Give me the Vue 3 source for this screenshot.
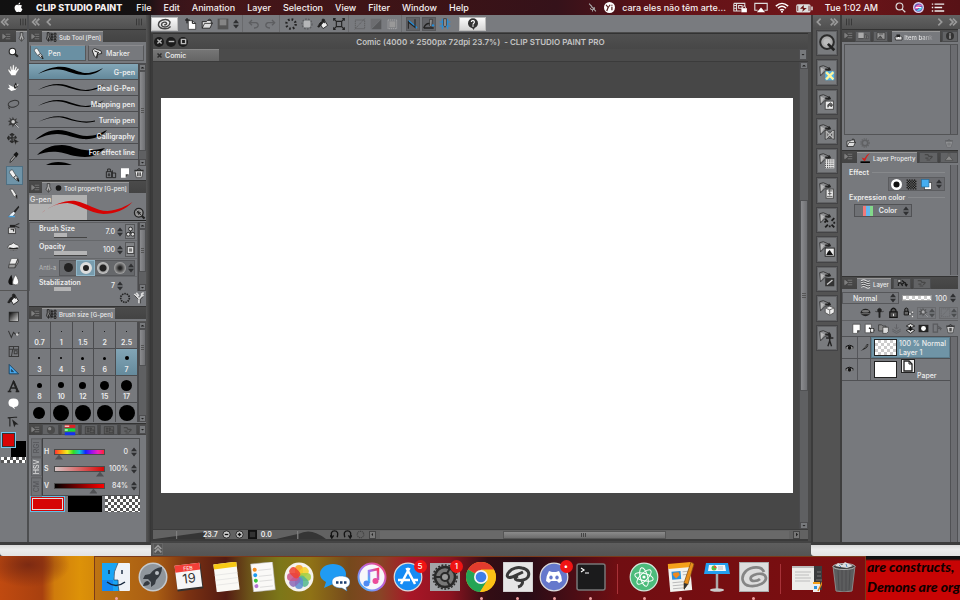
<script setup>
import { ref } from 'vue'

const menus = ['File', 'Edit', 'Animation', 'Layer', 'Selection', 'View', 'Filter', 'Window', 'Help']

const tools = [
  ['magnify', 'Magnify'], ['hand', 'Move canvas'], ['rotate', 'Operation'], ['lasso', 'Lasso'],
  ['wand', 'Auto select'], ['move', 'Move layer'], ['dropper', 'Eyedropper'], ['pen', 'Pen'],
  ['pencil', 'Pencil'], ['brush', 'Brush'], ['airbrush', 'Airbrush'], ['deco', 'Decoration'],
  ['eraser', 'Eraser'], ['blend', 'Blend'], ['fill', 'Fill'], ['gradient', 'Gradient'],
  ['contour', 'Contour'], ['frame', 'Frame border'], ['ruler', 'Ruler'], ['text', 'Text'],
  ['balloon', 'Balloon'], ['correct', 'Correct line']
]
const activeTool = ref('pen')

const thin = 'M9 10C19 4 29 3 37 5C46 8 53 11 61 9.500C68 8 72 6 75 4C70 9 63 11 57 11C48 11 42 8 34 6C26 4 18 6 9 10Z'
const pens = [
  { name: 'G-pen', d: 'M9 10C20 3 31 1.500 40 4C49 7 55 10.500 62 8.500C68 7.500 72 5 74 4C70 8 64 11 56 11C47 11 42 8 34 6C26 4 18 6 9 10Z' },
  { name: 'Real G-Pen', d: thin },
  { name: 'Mapping pen', d: thin },
  { name: 'Turnip pen', d: 'M9 10C20 4 30 3 38 5.500C48 9 57 11 66 8.500V9.500C57 12 48 10 38 7C30 4 20 5 9 10Z' },
  { name: 'Calligraphy', d: 'M6 12C13 6 20 2 29 2C41 2 47 8 58 8C66 8 72 5 78 2C74 8 63 12 54 11C44 10 38 6 28 6C20 6 14 8 6 12Z' },
  { name: 'For effect line', d: 'M8 11C15 4 23 1 33 1C42 1 46 5 56 6C64 7 70 5 76 4C72 8 66 13 56 13C44 13 38 9 29 8C20 7 14 9 8 11Z' },
  { name: '', d: 'M17 5C24 1 34 1 43 5Z' }
]

const sizes = [
  [0.7, 1], [1, 1], [1.5, 1], [2, 1], [2.5, 1],
  [3, 2], [4, 2], [5, 3], [6, 3], [7, 4],
  [8, 5], [10, 6], [12, 7], [15, 9], [17, 11],
  [20, 12], [25, 16], [30, 16], [40, 16], [50, 16]
]
const activeSize = ref(7)

const props = ref([
  { label: 'Brush Size', value: '7.0', pct: 40, icon: 'dyn' },
  { label: 'Opacity', value: '100', pct: 100, icon: 'sq' }
])
const channels = ref([
  { id: 'h', name: 'H', value: 0, max: 360, text: '0' },
  { id: 's', name: 'S', value: 100, max: 100, text: '100%' },
  { id: 'v', name: 'V', value: 84, max: 100, text: '84%' }
])

const materials = ['quick', 'mcolor', 'mimage', 'mframe', 'mdots', 'mballoon', 'mburst', 'mscene', 'mline', 'mcube', 'mpose']
const layerTools = ['lnew', 'lvec', 'lfolder', 'ldown', 'lmerge', 'lmask', 'lapply', 'trash']

const dock = [
  { id: 'finder', run: true }, { id: 'rocket' }, { id: 'calendar' }, { id: 'notes' }, { id: 'reminders' },
  { id: 'photos' }, { id: 'messages' }, { id: 'itunes' }, { id: 'appstore', badge: '5' },
  { id: 'prefs', badge: '1' }, { id: 'chrome', run: true }, { id: 'csp', run: true },
  { id: 'discord', badge: '•', run: true }, { id: 'terminal', run: true },
  { id: 'sep1', sep: true },
  { id: 'atom', run: true }, { id: 'pages', run: true }, { id: 'keynote' }, { id: 'spiral', run: true },
  { id: 'sep2', sep: true },
  { id: 'minimized' }, { id: 'bin' }
]
const petals = ['#f9a51a', '#f6d32b', '#a5cf45', '#58b88f', '#5f8fd0', '#8e6bb8', '#c9568b', '#ee4236']
</script>

<template>
  <div class="desktop">
    <svg class="defs" aria-hidden="true">
      <symbol id="apple" viewBox="0 0 16 18"><path fill="#fff" d="M11 0C9 0 7.500 2 8 4C10 4 11.300 2 11 0ZM8 5C6 4 4 4 2.500 5.300C0 7.500 1 12 2.500 14.500C4 17.500 5.500 17.500 8 16.600C10.500 17.500 12 17.500 13.500 15C14.200 14 14.700 13 15 12C12 10.500 12 7.500 14.500 6C13 4 10.500 4 8 5Z" /></symbol>
      <symbol id="mic" viewBox="0 0 16 16"><path d="M6 4V8M11 7V10M4 9C5 13 11 13 12 9M8 12V15M2 1L14 15" stroke="#aaa" stroke-width="1.800" fill="none" /></symbol>
      <symbol id="yi" viewBox="0 0 16 16"><circle cx="8" cy="8" r="8" fill="#fff" /><path d="M3 4L6 8L9 4M6 8L4 13M11.500 7V12M11.500 4V5.500" stroke="#522" stroke-width="1.800" fill="none" /></symbol>
      <symbol id="screenlock" viewBox="0 0 20 16"><path d="M1 2H17V7M1 2V13H11M5 2V13M1 5H5M1 9H5M8 5H13V9H8Z" stroke="#ddd" stroke-width="1.500" fill="none" /><rect x="12" y="9" width="8" height="6" fill="#fff" /><path d="M14 9V7Q16 4 18 7V9" stroke="#fff" fill="none" /></symbol>
      <symbol id="airplay" viewBox="0 0 20 16"><path d="M5 12H1V2H19V12H15" stroke="#ddd" stroke-width="1.600" fill="none" /><path d="M10 8L16 15H4Z" fill="#fff" /></symbol>
      <symbol id="wifi" viewBox="0 0 20 16"><path d="M1 6Q10 -2 19 6M4 9Q10 3.500 16 9M7 12Q10 9.500 13 12" stroke="#fff" stroke-width="2" fill="none" /><circle cx="10" cy="14" r="1.500" fill="#fff" /></symbol>
      <symbol id="battery" viewBox="0 0 22 16"><rect x="0" y="3" width="19" height="11" rx="2" fill="#ddd" /><rect x="20" y="6" width="2" height="5" fill="#ddd" /><path d="M10 4L5 9H9L8 13L14 8H10Z" fill="#611" /><path d="M2 5V12M17 5V12" stroke="#611" /></symbol>
      <symbol id="search" viewBox="0 0 16 16"><circle cx="6.500" cy="6.500" r="5" stroke="#ddd" stroke-width="1.600" fill="none" /><path d="M10 10L15 15" stroke="#ddd" stroke-width="1.800" /></symbol>
      <symbol id="siri" viewBox="0 0 16 16"><circle cx="8" cy="8" r="8" fill="#dcd2ee" /><circle cx="8" cy="8" r="6" fill="#6a5ab8" /><path d="M2 9Q8 0 14 6Q9 5 8 8Q7 12 2 9Z" fill="#f06ab4" /><path d="M5 13Q12 14 14 7Q9 8 5 13Z" fill="#51d5ec" /><path d="M4 8H12" stroke="#fff" stroke-width="1.500" /></symbol>
      <symbol id="list" viewBox="0 0 20 16"><path d="M5 3H19M5 8H16M5 13H19M1 3H3M1 8H3M1 13H3" stroke="#eee" stroke-width="2" /></symbol>

      <symbol id="dbl" viewBox="0 0 12 12"><path d="M6 2L2 6L6 10M10 2L6 6L10 10" stroke="#9a9a9a" stroke-width="2" fill="none" /></symbol>
      <symbol id="sgl" viewBox="0 0 12 12"><path d="M8 2L4 6L8 10" stroke="#9a9a9a" stroke-width="2" fill="none" /></symbol>
      <symbol id="grip" viewBox="0 0 12 12"><path d="M3 2V10M6 2V10M9 2V10" stroke="#333" stroke-width="1" /></symbol>
      <symbol id="pmenu" viewBox="0 0 12 12"><path d="M1 3L5 6L1 9ZM5 3H11M6 6H11M5 9H11" stroke="#808080" stroke-width="1" fill="#808080" /></symbol>
      <symbol id="penset" viewBox="0 0 18 16"><path d="M3 1H6V6L8 11L5 15L2 11L3 6ZM5 9V14M10 3H12V5H10ZM10 7H12V9H10ZM10 11H12V13H10ZM14 2H17V5H14ZM14 7H17V10H14ZM14 12H17V15H14ZM9 1V15" stroke="#151515" fill="#888" stroke-width="1.300" /></symbol>
      <symbol id="nib" viewBox="0 0 12 16"><path d="M4 1H8V6L10 10L6 15L2 10L4 6Z" fill="#aaa" stroke="#222" /><path d="M6 9V14" stroke="#222" /></symbol>
      <symbol id="dot" viewBox="0 0 12 16"><circle cx="6" cy="8" r="4.500" fill="#151515" /></symbol>

      <symbol id="magnify" viewBox="0 0 18 18"><path d="M10 10L15 15" stroke="#222" stroke-width="3" /><circle cx="7.500" cy="7.500" r="4.500" fill="#fff" stroke="#222" stroke-width="1.500" /></symbol>
      <symbol id="magnify2" viewBox="0 0 18 18"><path d="M11 11L16 16" stroke="#222" stroke-width="3" /><circle cx="8" cy="8" r="6" fill="#999" stroke="#222" stroke-width="1.800" /><path d="M5 5L11 11M8 5V11M5 8H11" stroke="#222" stroke-width="1.300" /></symbol>
      <symbol id="hand" viewBox="0 0 18 18"><path d="M6 16L2 10L1 7L3 7.500L5 10L4 3L6 3L7 8L8 1H10L10 8L12 3L14 4L12.500 9L15 6L17 7L13 13L12 16Z" fill="#fff" stroke="#555" stroke-width=".5" /></symbol>
      <symbol id="rotate" viewBox="0 0 18 18"><path d="M2 5L8 8L16 4L12 12L6 14L1 10L4 9Z" fill="#fff" /><path d="M9 8L12 2L15 8L11 11Z" fill="#222" /><path d="M11 7L13 5L13 9Z" fill="#ddd" /></symbol>
      <symbol id="lasso" viewBox="0 0 18 18"><ellipse cx="9" cy="8" rx="7.500" ry="4.500" transform="rotate(-15 9 8)" fill="none" stroke="#333" stroke-width="1.400" /><path d="M4 11Q1 13 4 15" stroke="#333" stroke-width="1.400" fill="none" /></symbol>
      <symbol id="wand" viewBox="0 0 18 18"><path d="M8 1L10 5L14 3L12 7L16 9L12 10L16 16L10 12L8 16L7 12L2 13L4 9L1 7L5 6L3 2L7 5Z" fill="#3a3a3a" /><circle cx="8.500" cy="8" r="2.500" fill="#ccc" /><path d="M11 11L16 16" stroke="#eee" /></symbol>
      <symbol id="move" viewBox="0 0 18 18"><path d="M1 7H13M7 1V13M4 3L7 1L10 3M4 11L7 13L10 11M3 4L1 7L3 10M11 4L13 7" stroke="#2a2a2a" stroke-width="2" fill="none" /><path d="M8 7L17 12L13 13L12 17Z" fill="#222" stroke="#888" stroke-width=".5" /></symbol>
      <symbol id="dropper" viewBox="0 0 18 18"><path d="M4 16L5 12L10 6L12 8L7 14Z" fill="#999" stroke="#222" /><path d="M9 5L13 1L16 4L13 9Z" fill="#151515" /></symbol>
      <symbol id="pen" viewBox="0 0 18 18"><path d="M3 2L6 1L11 9L7 12L2 5Z" fill="#f2f2f2" stroke="#333" stroke-width=".8" /><path d="M8 12L11 9L14 12L15 17L11 15Z" fill="#ddd" stroke="#222" /><path d="M12 12L15 17" stroke="#111" stroke-width="1.500" /></symbol>
      <symbol id="pencil" viewBox="0 0 18 18"><path d="M4 3L8 3L13 11L14 16L9 12Z" fill="#eee" stroke="#333" stroke-width=".8" /><path d="M11 12L14 16L14 11Z" fill="#222" /></symbol>
      <symbol id="brush" viewBox="0 0 18 18"><path d="M16 1L9 9L11 11L17 3Z" fill="#222" /><path d="M9 9L5 12L2 16L8 16L12 11Z" fill="#e9f2fa" stroke="#333" stroke-width=".7" /><path d="M2 16H11" stroke="#4b9fd8" stroke-width="2" /></symbol>
      <symbol id="airbrush" viewBox="0 0 18 18"><path d="M2 8H11L12 16H2Z" fill="#ddd" stroke="#222" /><path d="M4 4H12V7H4Z" fill="#222" /><path d="M12 4L17 2M12 6L17 8M5 10H9V13" stroke="#333" stroke-width="1.500" fill="none" /></symbol>
      <symbol id="deco" viewBox="0 0 18 18"><path d="M1 10Q3 5 6 6Q9 2 12 6Q16 6 17 10Q13 15 9 14Q4 15 1 10Z" fill="#eee" stroke="#333" /><path d="M3 11Q9 13 15 11" stroke="#222" stroke-width="2" fill="none" /></symbol>
      <symbol id="eraser" viewBox="0 0 18 18"><path d="M6 2H15L12 10H3Z" fill="#eee" stroke="#444" stroke-width=".8" /><path d="M3 10H12L11 15H2ZM12 10L15 3L16 7L11 15" fill="#999" stroke="#333" /></symbol>
      <symbol id="blend" viewBox="0 0 18 18"><path d="M6 1Q1 9 2 12Q3 16 8 15V8Z" fill="#111" /><path d="M12 1Q17 9 16 13Q13 17 8 14Q7 9 12 1Z" fill="#fff" stroke="#555" /></symbol>
      <symbol id="fill" viewBox="0 0 18 18"><path d="M4 8L11 3L16 11L9 16Z" fill="#eee" stroke="#222" stroke-width="1.300" /><path d="M8 6Q6 0 11 2L12 8M4 8L1 13Q3 15 5 12L10 6L6 6Z" fill="#222" stroke="#222" /></symbol>
      <symbol id="gradient" viewBox="0 0 18 18"><linearGradient id="gg" x1="0" y1="0" x2="1" y2="1"><stop offset="0" stop-color="#000" /><stop offset="1" stop-color="#ddd" /></linearGradient><rect x="3" y="3" width="13" height="13" fill="url(#gg)" stroke="#222" /></symbol>
      <symbol id="contour" viewBox="0 0 18 18"><path d="M2 4L6 13L9 6L13 10L17 6" fill="none" stroke="#333" stroke-width="1.400" /><circle cx="14" cy="9" r="1.800" fill="#ccc" /></symbol>
      <symbol id="frame" viewBox="0 0 18 18"><path d="M3 2H16V16H3ZM3 6H16M8 6L6 16M10 8H14V12H10ZM9 2V6" fill="none" stroke="#3b3b3b" stroke-width="1.400" /></symbol>
      <symbol id="ruler" viewBox="0 0 18 18"><path fill-rule="evenodd" d="M3 2L16 15H3ZM6 9V12H9Z" fill="#48a8ee" stroke="#113b58" stroke-width="1.200" /></symbol>
      <symbol id="text" viewBox="0 0 18 18"><path d="M3 16L9 2L15 16M5 11H13M1 16H6M12 16H17" fill="none" stroke="#222" stroke-width="2" /><path d="M9 2L15 16" stroke="#222" stroke-width="3" /></symbol>
      <symbol id="balloon" viewBox="0 0 18 18"><path d="M9 2Q16 2 16 8Q16 14 10 14L11 17L7 14Q2 13 2 8Q2 2 9 2Z" fill="#fff" /></symbol>
      <symbol id="correct" viewBox="0 0 18 18"><path d="M1 4Q8 3 11 3H14M4 4V16" fill="none" stroke="#222" stroke-width="1.500" /><path d="M7 6L16 13L12 13L10 17Z" fill="#222" /></symbol>
      <symbol id="marker" viewBox="0 0 18 18"><path d="M2 5Q4 0 9 3L15 5L16 9L10 10L9 16L5 13Z" fill="#e8e8e8" stroke="#1a1a1a" stroke-width="1.300" /><path d="M5 5L12 8M10 8L8 15" stroke="#222" stroke-width="1.500" /></symbol>

      <symbol id="bag" viewBox="0 0 18 18"><path d="M2 7H10V16H2ZM4 7V3H8V7M11 5V16H16V9H11M6 9V14M4 12H8" fill="none" stroke="#222" stroke-width="1.400" /></symbol>
      <symbol id="sheet" viewBox="0 0 18 18"><path d="M3 2H15V11L10 16H3Z" fill="#fff" /><path d="M10 16V11H15Z" fill="#444" /></symbol>
      <symbol id="trash" viewBox="0 0 18 18"><path d="M3 6H15L13 16H5Z" fill="#eee" stroke="#222" /><path d="M2 5H16M6 5Q9 0 12 5M7 8V14M9 8V14M11 8V14" stroke="#222" stroke-width="1.300" fill="none" /></symbol>
      <symbol id="spin" viewBox="0 0 8 12"><path d="M4 0L8 5H0ZM4 12L8 7H0Z" fill="#2f3032" /></symbol>
      <symbol id="dyn" viewBox="0 0 12 16"><path d="M6 8V5M6 8L4 11M6 8L9 11" stroke="#111" /><g fill="#ddd" stroke="#222" stroke-width="1.200"><circle cx="6" cy="4" r="2.500" /><circle cx="3" cy="11" r="2.500" /><circle cx="9" cy="11" r="2.500" /></g></symbol>
      <symbol id="sq" viewBox="0 0 12 16"><rect x="3" y="5" width="6" height="6" fill="#777" stroke="#eee" stroke-width="1.500" /><rect x="1.500" y="3.500" width="9" height="9" fill="none" stroke="#333" /></symbol>
      <symbol id="ring" viewBox="0 0 18 18"><circle cx="9" cy="9" r="6.500" fill="none" stroke="#222" stroke-width="2.500" stroke-dasharray="2.200 1.400" /></symbol>
      <symbol id="wrench" viewBox="0 0 18 18"><path d="M2 3L6 7L8 5L5 1M16 1L13 3V6L16 5M13 6L9 11V17M6 7L9 11" stroke="#ddd" stroke-width="2.500" fill="none" /><path d="M2 5L8 11M15 7L11 11V17" stroke="#222" fill="none" /></symbol>
      <symbol id="sphere" viewBox="0 0 18 16"><circle cx="9" cy="8" r="6" fill="#4b4b4b" /><circle cx="7" cy="6" r="2.500" fill="#888" /></symbol>
      <symbol id="rgb" viewBox="0 0 18 16"><path d="M2 1H16V5H2Z" fill="#d22" /><path d="M2 6H16V10H2Z" fill="#1d3" /><path d="M2 11H16V15H2Z" fill="#13e" /><path d="M2 3H8M2 8H6" stroke="#fff" stroke-width="2" opacity=".7" /></symbol>
      <symbol id="swatch" viewBox="0 0 18 16"><path d="M2 3H16V14H2ZM5 5H7V7H5ZM9 5H11V7H9ZM5 9H7V11H5ZM12 8H15V12H9V9Z" fill="#5c5c5c" stroke="#3a3a3a" /></symbol>

      <symbol id="spiralIcon" viewBox="0 0 20 14"><path d="M9 8Q12 8 12 6Q11 4 8 5Q5 6 6 9Q8 12 13 10Q17 8 16 4Q13 0 7 2Q1 4 2 9Q4 13 10 13Q14 13 17 10" fill="none" stroke="#444" stroke-width="1.800" /></symbol>
      <symbol id="newdoc" viewBox="0 0 18 18"><path d="M5 4H11L16 8V17H5Z" fill="#fff" stroke="#222" /><path d="M11 4V8H16M3 0V8M0 3H7" stroke="#111" stroke-width="1.500" fill="none" /></symbol>
      <symbol id="open" viewBox="0 0 20 18"><path d="M2 5H9L11 3H17V7L19 7L15 16H2Z" fill="#ddd" stroke="#222" stroke-width="1.500" /><path d="M2 16L6 8H19M12 2Q15 -1 17 3" stroke="#222" stroke-width="1.300" fill="none" /></symbol>
      <symbol id="save" viewBox="0 0 18 18"><path d="M1 1H17V17H1Z" fill="#555" /><path d="M4 2H14V11H4Z" fill="#858585" /></symbol>
      <symbol id="undo" viewBox="0 0 18 18"><path d="M6 3L2 7L6 11M2 7H12Q16 8 15 12Q14 15 9 15" stroke="#5d5e61" stroke-width="2" fill="none" /></symbol>
      <symbol id="burst" viewBox="0 0 18 18"><circle cx="9" cy="9" r="7" fill="none" stroke="#222" stroke-width="3.500" stroke-dasharray="2.500 3" /></symbol>
      <symbol id="clearout" viewBox="0 0 18 18"><rect x="4" y="4" width="10" height="10" fill="#b5b6b8" /><circle cx="9" cy="9" r="7.500" fill="none" stroke="#5c5d60" stroke-width="2" stroke-dasharray="2.500 2" /></symbol>
      <symbol id="scale" viewBox="0 0 18 18"><path d="M5 5H13V13H5ZM2 2L5 5M16 2L13 5M2 16L5 13M16 16L13 13M1 4V1H4M14 1H17V4M1 14V17H4M14 17H17V14" fill="none" stroke="#222" stroke-width="1.700" /></symbol>
      <symbol id="desel" viewBox="0 0 18 18"><path d="M2 3H16V16H2ZM16 1L1 17" fill="none" stroke="#5b5b5d" stroke-width="1.300" stroke-dasharray="2 1" /></symbol>
      <symbol id="invsel" viewBox="0 0 18 18"><path d="M1 1H17L1 17Z" fill="#6c6d70" /><path d="M17 2V17H2Z" fill="#58595b" /></symbol>
      <symbol id="border" viewBox="0 0 18 18"><rect x="5" y="5" width="9" height="9" fill="#999" /><rect x="3" y="3" width="13" height="13" fill="none" stroke="#bbb" stroke-dasharray="2 1" /></symbol>
      <symbol id="snapr" viewBox="0 0 18 18"><path d="M2 4L15 15" stroke="#238edb" stroke-width="2.500" /><path d="M2 6L12 14V2M2 4V16" stroke="#222" stroke-width="1.600" fill="none" /></symbol>
      <symbol id="snaps" viewBox="0 0 18 18"><path d="M1 15Q5 6 12 9M1 15H16" stroke="#222" stroke-width="2" fill="none" /><path d="M10 2V12L13 14L14 2Z" fill="#999" stroke="#222" /><circle cx="15" cy="11" r="1.800" fill="#238edb" /></symbol>
      <symbol id="snapg" viewBox="0 0 18 18"><path d="M1 6H17M1 12H17M5 1V17M13 1V17" stroke="#238edb" stroke-width="1.600" /><path d="M7 1H11V11L9 14L7 11Z" fill="#999" stroke="#222" /></symbol>
      <symbol id="help" viewBox="0 0 18 18"><circle cx="9" cy="8" r="7.500" fill="#333" /><path d="M7 14L10 18L12 14" fill="#333" /><path d="M6.500 6Q7 3.500 9.500 4Q12 5 10.500 7.500Q9 8.500 9 10M9 11V13" stroke="#fff" stroke-width="1.800" fill="none" /></symbol>

      <symbol id="fold" viewBox="0 0 22 26"><path d="M3 6L7 5L14 8V10L9 11L4 16Z" fill="#8d8e90" stroke="#333" /><path d="M9 9H14L13 7" stroke="#222" stroke-width="2" fill="none" /><path d="M4 7V15L8 9Z" fill="#bbb" /></symbol>
      <symbol id="quick" viewBox="0 0 22 26"><circle cx="11" cy="12" r="7.500" fill="#aaa" stroke="#2b2b2b" stroke-width="2.200" /><circle cx="11" cy="12" r="4" fill="#bbb" /><path d="M12 14L19 21" stroke="#222" stroke-width="3" /></symbol>
      <symbol id="mcolor" viewBox="0 0 22 26"><use href="#fold" /><rect x="9" y="11" width="10" height="10" fill="#4fb2e8" /><path d="M10 12L18 20M18 12L10 20" stroke="#fff6a0" stroke-width="2.500" /></symbol>
      <symbol id="mimage" viewBox="0 0 22 26"><use href="#fold" /><rect x="9" y="12" width="9" height="9" fill="#eee" stroke="#444" /><path d="M12 19V16L15 14L17 16L16 18L14 17" stroke="#333" stroke-width="1" fill="#666" /></symbol>
      <symbol id="mframe" viewBox="0 0 22 26"><use href="#fold" /><path d="M9 11L12 12V20L9 21ZM19 11L16 12V20L19 21ZM13 13H15V15H13ZM13 18H15V20H13Z" fill="#aaa" stroke="#222" stroke-width=".7" /><path d="M10 12L18 20M18 12L10 20" stroke="#bbb" stroke-width="1.500" /></symbol>
      <symbol id="mdots" viewBox="0 0 22 26"><use href="#fold" /><rect x="9" y="11" width="10" height="10" fill="#eee" /><path d="M9 12H19M9 14H19M9 16H19M9 18H19M9 20H19" stroke="#222" stroke-dasharray="1 1" /></symbol>
      <symbol id="mballoon" viewBox="0 0 22 26"><use href="#fold" /><rect x="10" y="12" width="8" height="10" fill="#eee" stroke="#444" /><path d="M12 14H17M12 17H16M14 12V19M11 20H17" stroke="#555" /></symbol>
      <symbol id="mburst" viewBox="0 0 22 26"><use href="#fold" /><path d="M9 12L12 15M19 11L16 14M9 21L12 18M19 21L16 18M8 15H10M18 16H20M14 21V19" stroke="#1c1c1c" stroke-width="2" /></symbol>
      <symbol id="mscene" viewBox="0 0 22 26"><use href="#fold" /><rect x="9" y="12" width="10" height="9" fill="#eee" stroke="#222" /><path d="M10 20L12 16L14 14L16 17L18 20Z" fill="#111" /></symbol>
      <symbol id="mline" viewBox="0 0 22 26"><use href="#fold" /><rect x="9" y="12" width="10" height="9" fill="#333" /><path d="M11 19L17 14" stroke="#ccc" stroke-width="1.500" /></symbol>
      <symbol id="mcube" viewBox="0 0 22 26"><use href="#fold" /><path d="M14 11L19 13V18L14 21L9 18V13Z" fill="#eee" stroke="#555" /><path d="M9 13L14 15L19 13M14 15V21" stroke="#666" fill="none" /></symbol>
      <symbol id="mpose" viewBox="0 0 22 26"><use href="#fold" /><path d="M14 10V16M10 13H18M14 16L12 22M14 16L16 22" stroke="#222" stroke-width="1.500" /><circle cx="14" cy="11" r="1.500" fill="#222" /></symbol>

      <symbol id="navtab" viewBox="0 0 18 16"><path d="M2 3H10V11H2Z" fill="#aaa" /><path d="M12 6H14V12H12ZM15 8H17V12H15ZM2 12H10" fill="#888" stroke="#333" stroke-width=".6" /></symbol>
      <symbol id="pictab" viewBox="0 0 18 16"><path d="M3 3H15V13H3Z" fill="#999" stroke="#333" /><path d="M4 12L8 8L11 12M6 5H12" stroke="#333" fill="#555" /></symbol>
      <symbol id="itemtab" viewBox="0 0 18 16"><path d="M2 8L6 6H13L16 9V14H3Z" fill="#ddd" stroke="#1b1b1b" stroke-width="1.400" /><path d="M5 3H12V9H5Z" fill="#222" /><path d="M7 9H11" stroke="#fff" stroke-width="2" /></symbol>
      <symbol id="infotab" viewBox="0 0 18 16"><circle cx="9" cy="8" r="6" fill="#333" /><path d="M9 4V6M9 7V12" stroke="#aaa" stroke-width="2" /></symbol>
      <symbol id="gear" viewBox="0 0 18 18"><circle cx="9" cy="9" r="5" fill="none" stroke="#606163" stroke-width="3" /><circle cx="9" cy="9" r="7.500" fill="none" stroke="#606163" stroke-width="2" stroke-dasharray="2 2" /></symbol>
      <symbol id="redtick" viewBox="0 0 20 18"><path d="M1 15H18V18H1Z" fill="#000" /><path d="M3 8L8 10Q11 3 18 0Q11 8 9 15Q6 14 3 8Z" fill="#d5201c" /></symbol>
      <symbol id="layers" viewBox="0 0 20 18"><path d="M2 3Q7 0 11 3T18 3M2 7Q7 4 11 7T18 7M2 11Q7 8 11 11T18 11M2 15Q7 12 11 15T18 15" fill="none" stroke="#ddd" stroke-width="2" /><path d="M2 5Q7 2 11 5T18 5M2 9Q7 6 11 9T18 9M2 13Q7 10 11 13T18 13" fill="none" stroke="#222" /></symbol>
      <symbol id="hist" viewBox="0 0 20 18"><path d="M3 3H8V8H3Z" fill="#bbb" stroke="#222" /><path d="M4 14Q3 8 8 9L11 14M17 14Q17 7 12 8M10 5L14 8L10 11M15 11L17 14L19 11" stroke="#1b1b1b" stroke-width="2" fill="none" /></symbol>
      <symbol id="misc" viewBox="0 0 20 18"><path d="M3 5H8L10 8H15M4 11H9M12 12L16 8M6 14L12 14" stroke="#484848" stroke-width="2" fill="none" /></symbol>
      <symbol id="flask" viewBox="0 0 18 16"><path d="M8 2V7L3 13H15L10 7V2Z" fill="#8a8a8a" stroke="#4a4a4a" /></symbol>
      <symbol id="fcircle" viewBox="0 0 18 18"><circle cx="9" cy="9" r="7" fill="#111" stroke="#fff" stroke-width="4" /></symbol>
      <symbol id="ftone" viewBox="0 0 18 18"><rect x="1" y="1" width="16" height="16" fill="#666" /><path d="M1 2H17M1 6H17M1 10H17M1 14H17" stroke="#111" stroke-width="2" stroke-dasharray="2 2" /><path d="M3 4H17M3 8H17M3 12H17M3 16H17" stroke="#111" stroke-width="2" stroke-dasharray="2 2" /></symbol>
      <symbol id="flayer" viewBox="0 0 18 18"><rect x="6" y="6" width="11" height="11" fill="#fff" stroke="#333" /><rect x="1" y="1" width="12" height="12" fill="#45adf0" stroke="#1f6b9b" /></symbol>
      <symbol id="lclip" viewBox="0 0 18 18"><ellipse cx="9" cy="9" rx="8" ry="6" fill="#222" /><ellipse cx="9" cy="7" rx="6" ry="2" fill="#777" /><path d="M2 11H16" stroke="#aaa" /></symbol>
      <symbol id="lref" viewBox="0 0 18 18"><path d="M6 4Q9 0 12 4V8H10V17H8V8H6ZM2 7L5 8M16 7L13 8" fill="#222" stroke="#222" /></symbol>
      <symbol id="lock" viewBox="0 0 18 18"><path d="M3 8H15V17H3ZM5 8V5Q9 -1 13 5V8" fill="#555" stroke="#151515" stroke-width="2" /><path d="M9 11V15" stroke="#eee" stroke-width="1.500" /></symbol>
      <symbol id="locka" viewBox="0 0 18 18"><path d="M2 7H9V13H2ZM3 7V3Q5 0 8 3V7" fill="#666" stroke="#151515" stroke-width="1.600" /><path d="M10 10H13V13H10ZM14 14H17V17H14ZM14 7H17V10H14Z" fill="#fff" stroke="#222" stroke-width=".5" /></symbol>
      <symbol id="lnew" viewBox="0 0 18 18"><path d="M3 2H15V12L10 17H3Z" fill="#fff" stroke="#333" /><path d="M10 17V12H15Z" fill="#444" /></symbol>
      <symbol id="lvec" viewBox="0 0 18 18"><path d="M2 2H12V16H2Z" fill="#fff" stroke="#333" /><path d="M8 8L17 12M10 15L17 12" stroke="#222" stroke-width="2" /><rect x="11" y="9" width="5" height="6" fill="#eee" stroke="#222" /></symbol>
      <symbol id="lfolder" viewBox="0 0 18 18"><path d="M1 3H6L8 5H13V13H1Z" fill="#888" stroke="#222" /><path d="M8 7H17V14L14 17H8Z" fill="#ddd" stroke="#222" /></symbol>
      <symbol id="ldown" viewBox="0 0 18 18"><path d="M9 2V9M6 7L9 10L12 7M2 10L9 14L16 10M2 13L9 17L16 13" stroke="#5f6064" stroke-width="1.500" fill="none" /></symbol>
      <symbol id="lmerge" viewBox="0 0 18 18"><path d="M2 5L9 1L16 5L9 8ZM2 12L9 9L16 12L9 17Z" stroke="#1b1b1b" stroke-width="1.400" fill="#ddd" /><path d="M9 5V12M6 9L9 12L12 9" stroke="#111" stroke-width="2" fill="none" /></symbol>
      <symbol id="lmask" viewBox="0 0 18 18"><rect x="1" y="3" width="16" height="12" fill="#222" /><circle cx="9" cy="9" r="4" fill="#fff" /></symbol>
      <symbol id="lapply" viewBox="0 0 18 18"><path d="M2 2H9V15H2ZM9 9H16M9 5L14 8V12" fill="none" stroke="#5a5b5e" stroke-width="2" /></symbol>
      <symbol id="eye" viewBox="0 0 18 14"><path d="M1 6Q9 -1 17 6" stroke="#111" stroke-width="2" fill="none" /><path d="M1 8Q9 1 17 8Q9 14 1 8Z" fill="#bbb" stroke="#222" /><circle cx="9" cy="7.500" r="3.500" fill="#111" /></symbol>
      <symbol id="quill" viewBox="0 0 18 18"><path d="M1 16Q5 13 7 11L14 2L17 3Q16 9 8 13Z" fill="#222" /><path d="M9 10L15 4" stroke="#ccc" /></symbol>
      <symbol id="paper" viewBox="0 0 14 14"><rect x=".5" y=".5" width="13" height="13" fill="#eee" stroke="#222" /><path d="M3 2H8L11 5V12H3Z" fill="#fff" stroke="#222" stroke-width="1.300" /><path d="M8 2V5H11" stroke="#222" fill="none" /></symbol>

      <symbol id="finder" viewBox="0 0 30 30"><rect x="1" y="1" width="28" height="28" rx="1" fill="#eef2f7" /><path d="M1 1H17Q12 10 13 18H17Q17 25 18 29H1Z" fill="#19a5f5" /><path d="M1 18H12V29H1Z" fill="#1674f0" opacity=".6" /><path d="M8 8V12M21 8V12M6 20Q15 27 24 20" stroke="#15263b" stroke-width="1.400" fill="none" /><path d="M17 1Q12 10 13 18H17Q17 25 18 29" stroke="#26435f" stroke-width=".7" fill="none" /></symbol>
      <symbol id="rocket" viewBox="0 0 30 30"><circle cx="15" cy="15" r="14.500" fill="#c5cacf" /><circle cx="15" cy="15" r="13" fill="#90969c" /><path d="M24 5Q16 6 12 12L7 13L5 17L10 17L13 20L13 25L17 22L18 18Q24 13 24 5Z" fill="#353a40" /><circle cx="19" cy="11" r="2" fill="#b9bdc2" /><path d="M5 24Q6 19 10 19L12 21Q11 24 5 24Z" fill="#353a40" /></symbol>
      <symbol id="calendar" viewBox="0 0 30 30"><g transform="rotate(-7 15 15)"><path d="M2 3H28V28H2Z" fill="#34312f" /><path d="M2 2H27V26H2Z" fill="#f6f6f6" /><path d="M2 2H27V9H2Z" fill="#f33f38" /></g></symbol>
      <symbol id="notes" viewBox="0 0 30 30"><g transform="rotate(-7 15 15)"><path d="M4 1H27V29H4Z" fill="#faf9f5" /><path d="M4 1H27V6H4Z" fill="#f8c915" /><path d="M4 12H27M4 17H27M4 22H27" stroke="#ddd" stroke-width=".6" /></g></symbol>
      <symbol id="reminders" viewBox="0 0 30 30"><g transform="rotate(-6 15 15)"><path d="M5 1H27V29H5Z" fill="#faf9f7" stroke="#aaa" stroke-width=".5" /><path d="M12 8H25M12 14H25M12 19H25M12 25H25" stroke="#ccc" stroke-width=".6" /><circle cx="8.500" cy="7" r="2" fill="#f18b20" /><circle cx="8.500" cy="12.500" r="2" fill="#1d9bf0" /><circle cx="8.500" cy="18" r="2" fill="#39c43c" /><circle cx="8.500" cy="23.500" r="2" fill="#b473d4" /></g></symbol>
      <symbol id="photos" viewBox="0 0 30 30"><circle cx="15" cy="15" r="14.500" fill="#f5f2ee" /><rect v-for="(c, i) in petals" :key="c" x="11" y="3" width="8" height="12" rx="4" :fill="c" opacity=".88" :transform="`rotate(${i * 45} 15 15)`" /></symbol>
      <symbol id="messages" viewBox="0 0 30 30"><path d="M13 2C20 2 26 6 26 12C26 19 20 22 13 22L4 26L6 20C2 18 0 15 0 12C0 6 6 2 13 2Z" fill="#209bf3" /><path d="M21 14C26 14 30 16 30 20C30 23 28 25 26 25.500L27 29L22 26C16 26 12 24 12 20C12 16 16 14 21 14Z" fill="#fff" stroke="#2077c8" stroke-width=".5" /><path d="M16 20.500H27" stroke="#183d70" stroke-width="2.500" stroke-dasharray="2.500 1.500" /></symbol>
      <symbol id="itunes" viewBox="0 0 30 30"><linearGradient id="it" x1="0" y1="1" x2="1" y2="0"><stop offset="0" stop-color="#37c1fa" /><stop offset=".5" stop-color="#b06dec" /><stop offset="1" stop-color="#fa3b63" /></linearGradient><circle cx="15" cy="15" r="13.500" fill="#f8f6fa" stroke="url(#it)" stroke-width="2" /><path d="M12 21V9L21 7V18" stroke="url(#it)" stroke-width="2.500" fill="none" /><circle cx="9.500" cy="21.500" r="3" fill="#4e8bf4" /><circle cx="18.500" cy="19" r="3" fill="#ec4c9b" /></symbol>
      <symbol id="appstore" viewBox="0 0 30 30"><circle cx="15" cy="15" r="13.800" fill="#158bf4" stroke="#ddd" stroke-width="1.200" /><path d="M16.500 6L8 22M13.500 6L22 22M5 18H17M20 18H25" stroke="#fff" stroke-width="2.500" /></symbol>
      <symbol id="prefs" viewBox="0 0 30 30"><rect x="0" y="1" width="30" height="28" fill="#a3a5a8" /><circle cx="15" cy="15" r="10" fill="#777" stroke="#292929" stroke-width="2.500" /><circle cx="15" cy="15" r="12" fill="none" stroke="#292929" stroke-width="1.500" stroke-dasharray="2 1.500" /><path d="M15 15L5 15M15 15L20 6M15 15L20 24" stroke="#292929" stroke-width="2" /><circle cx="15" cy="15" r="4" fill="#999" stroke="#292929" stroke-width="2" /></symbol>
      <symbol id="chrome" viewBox="0 0 30 30"><circle cx="15" cy="15" r="15" fill="#fbc116" /><path d="M15 15L2 7.500A15 15 0 0 1 28 7.500H15Z" fill="#e33b2e" /><path d="M15 15L2 7.500A15 15 0 0 0 14 30L21 19Z" fill="#23a455" /><path d="M21 19L14 30A15 15 0 0 0 28 8H17Z" fill="#fbc116" /><circle cx="15" cy="15" r="7" fill="#f5f5f5" /><circle cx="15" cy="15" r="5.300" fill="#3f7ee8" /></symbol>
      <symbol id="csp" viewBox="0 0 30 30"><rect width="30" height="30" fill="#e6e6e6" stroke="#bbb" /><path d="M20 10L9 15C4 17 3 13 6 10C9 6 15 5 19 6C25 7 27 11 25 15C23 18 18 19 14 18C11 17 12 15 15 14M18 18C21 20 19 24 15 25" fill="none" stroke="#3a3a3a" stroke-width="3" /></symbol>
      <symbol id="discord" viewBox="0 0 30 30"><circle cx="15" cy="15" r="13.800" fill="#6578cc" stroke="#ddd" stroke-width="1.300" /><path d="M10 9L13 10H17L20 9Q23 14 23 19L20 21L18 19H12L10 21L7 19Q7 14 10 9Z" fill="#fff" /><ellipse cx="12" cy="15.500" rx="1.700" ry="2" fill="#6578cc" /><ellipse cx="18" cy="15.500" rx="1.700" ry="2" fill="#6578cc" /></symbol>
      <symbol id="terminal" viewBox="0 0 30 30"><rect x="1" y="2" width="28" height="26" rx="2" fill="#1b1b1c" stroke="#777" stroke-width="1.500" /><path d="M5 6L8 8L5 10M9 11H13" stroke="#fff" fill="none" stroke-width="1.200" /></symbol>
      <symbol id="atom" viewBox="0 0 30 30"><circle cx="15" cy="15" r="13.800" fill="#4cbc7b" stroke="#d4eadd" stroke-width="1.200" /><g fill="none" stroke="#fff" stroke-width="1"><ellipse cx="15" cy="15" rx="9.500" ry="3.700" transform="rotate(15 15 15)" /><ellipse cx="15" cy="15" rx="9.500" ry="3.700" transform="rotate(75 15 15)" /><ellipse cx="15" cy="15" rx="9.500" ry="3.700" transform="rotate(135 15 15)" /></g><circle cx="15" cy="15" r="1.600" fill="#fff" /></symbol>
      <symbol id="pages" viewBox="0 0 30 30"><g transform="rotate(-5 15 15)"><path d="M3 2H25V29H3Z" fill="#f2f2ef" /><path d="M3 1H26V6H3Z" fill="#f5a11b" /><path d="M6 9H15V17H6Z" fill="#2b91dc" /><path d="M8 10L13 10L14 13L10 16L7 12Z" fill="#f18a1c" /><path d="M17 10H23M17 13H22M6 20H22M6 23H22M6 26H18" stroke="#bbb" /></g><path d="M25 0L28 2L22 22L18 27L18 21Z" fill="#e9901b" stroke="#7e4d14" stroke-width=".7" /><path d="M18 21L22 22L18 28Z" fill="#333" /></symbol>
      <symbol id="keynote" viewBox="0 0 30 30"><path d="M15 12V27" stroke="#aaa" stroke-width="2.500" /><ellipse cx="15" cy="28" rx="7" ry="1.800" fill="#ccc" /><path d="M4 1H26L28 12H2Z" fill="#229ff0" /><path d="M7 3H23L24 9H6Z" fill="#f2f7fa" /><circle cx="12" cy="6" r="2.500" fill="#58bd43" /><path d="M12 6V3.500A2.500 2.500 0 0 1 14.500 6Z" fill="#e65c33" /><path d="M16 5H21M16 7H21" stroke="#bbb" /></symbol>
      <symbol id="spiral" viewBox="0 0 30 30"><rect x=".5" y=".5" width="29" height="29" fill="#ddd" stroke="#aaa" /><path d="M25 10C23 4 13 4 7 9C1 15 3 23 11 24C20 25 27 20 27 16C26 11 20 11 15 13C10 15 11 19 15 19C18 19 20 18 21 17" fill="none" stroke="#858585" stroke-width="2.700" /></symbol>
      <symbol id="minimized" viewBox="0 0 30 30"><rect x="10" y="4" width="21" height="24" fill="#3a3b3d" /><rect x="0" y="4" width="22" height="24" fill="#ededeb" /><path d="M0 5H22" stroke="#bcbcbc" stroke-width="2" /><path d="M3 10H19M3 13H17M3 16H19M3 19H18" stroke="#aaa" stroke-width=".7" /><path d="M25 10H29M25 14H29M24 18H30" stroke="#777" /><path d="M21 21H28V30H21Z" fill="#eee" /><path d="M21 20H28V22H21Z" fill="#f5a11b" /><path d="M22 24H25V27H22Z" fill="#2b91dc" /><path d="M31 19L26 29" stroke="#e48a1c" stroke-width="1.500" /></symbol>
      <symbol id="bin" viewBox="0 0 30 30"><path d="M4 4H26L23 29Q15 31 7 29Z" fill="#5c5d5e" stroke="#888" /><path d="M9 8L10 28M13 8L13 29M17 8L17 29M21 8L20 28" stroke="#4c4d4e" /><ellipse cx="15" cy="4.500" rx="11" ry="3" fill="#3a3a3a" stroke="#b5b5b5" /><path d="M6 4L9 1L13 3L16 0L20 2L24 4L18 6L11 5Z" fill="#ddd" /><path d="M10 3L12 5M17 2L18 5" stroke="#4f89c0" /></symbol>
    </svg>

    <header class="menubar">
      <svg class="apple"><use href="#apple" /></svg>
      <strong>CLIP STUDIO PAINT</strong>
      <nav><a v-for="m in menus" :key="m" href="#">{{ m }}</a></nav>
      <div class="status">
        <svg class="m9"><use href="#mic" /></svg>
        <svg class="m11"><use href="#yi" /></svg>
        <span class="song">cara eles não têm arte...</span>
        <svg class="m14"><use href="#screenlock" /></svg>
        <svg class="m14"><use href="#airplay" /></svg>
        <svg class="m14"><use href="#wifi" /></svg>
        <svg class="m16"><use href="#battery" /></svg>
        <time>Tue 1:02 AM</time>
        <svg class="m11"><use href="#search" /></svg>
        <svg class="m11"><use href="#siri" /></svg>
        <svg class="m14"><use href="#list" /></svg>
      </div>
    </header>

    <main class="work">
      <section class="side left">
        <div class="sidebody">
          <div class="toolcol">
            <div class="strip"><svg><use href="#dbl" /></svg><svg><use href="#grip" /></svg></div>
            <div class="tabs"><svg><use href="#pmenu" /></svg><span class="tab mini"><svg><use href="#nib" /></svg></span></div>
            <div class="tools">
              <button v-for="[id, name] in tools" :key="id" :aria-label="name" :class="{ on: activeTool === id }" @click="activeTool = id"><svg><use :href="'#' + id" /></svg></button>
            </div>
            <div class="swatches"><i class="bgc"></i><i class="fgc"></i><i class="clear"></i></div>
          </div>

          <div class="panels">
            <div class="strip"><svg><use href="#dbl" /></svg><svg><use href="#sgl" /></svg><svg class="end"><use href="#grip" /></svg></div>
            <section class="sub">
              <div class="tabs"><svg><use href="#pmenu" /></svg><span class="tab"><svg class="wide"><use href="#penset" /></svg>Sub Tool [Pen]</span></div>
              <div class="groups">
                <button class="on"><svg><use href="#pen" /></svg>Pen</button>
                <button><svg><use href="#marker" /></svg>Marker</button>
              </div>
              <div class="scroller penbox">
                <ul>
                  <li v-for="(p, i) in pens" :key="i" :class="{ on: i === 0 }">
                    <svg viewBox="0 0 80 15"><path :d="p.d" /></svg><span>{{ p.name }}</span>
                  </li>
                </ul>
                <div class="sb"><i class="up"></i><i class="thumb t80"></i><i class="dn"></i></div>
              </div>
              <div class="foot"><svg><use href="#bag" /></svg><svg><use href="#sheet" /></svg><svg><use href="#trash" /></svg></div>
            </section>

            <section class="prop">
              <div class="tabs"><svg><use href="#pmenu" /></svg><span class="tab"><svg><use href="#nib" /></svg><svg><use href="#dot" /></svg>Tool property [G-pen]</span></div>
              <div class="preview">
                <span>G-pen</span>
                <svg class="stroke" viewBox="0 0 116 25"><path d="M12 18C25 9 36 5 46 6C58 8 66 16 78 16C89 15 97 11 103 7C96 15 85 19 74 19C59 18 50 9 38 8C28 8 20 12 12 18Z" fill="#d60404" /></svg>
                <svg class="mag"><use href="#magnify2" /></svg>
              </div>
              <div class="scroller propbox">
                <div class="rows">
                  <div v-for="p in props" :key="p.label" class="prow">
                    <label>{{ p.label }}<input v-model="p.pct" type="range" class="flat" :style="{ '--f': p.pct + '%' }"></label>
                    <output>{{ p.value }}</output>
                    <svg class="spin"><use href="#spin" /></svg>
                    <button class="dynb" :aria-label="p.label + ' dynamics'"><svg><use :href="'#' + p.icon" /></svg></button>
                  </div>
                  <div class="prow anti">
                    <span>Anti-a</span>
                    <div class="aa">
                      <button aria-label="None"><i class="a0"></i></button><button class="on" aria-label="Weak"><i class="a1"></i></button><button aria-label="Middle"><i class="a2"></i></button><button aria-label="Strong"><i class="a3"></i></button>
                      <svg class="spin"><use href="#spin" /></svg>
                    </div>
                  </div>
                  <div class="prow">
                    <label>Stabilization<input type="range" class="flat" value="50" :style="{ '--f': '50%' }"></label>
                    <output>7</output>
                    <svg class="spin"><use href="#spin" /></svg>
                    <span class="dynb none"></span>
                  </div>
                </div>
                <div class="sb"><i class="up"></i><i class="thumb t70"></i><i class="dn"></i></div>
              </div>
              <div class="foot"><svg><use href="#ring" /></svg><svg><use href="#wrench" /></svg></div>
            </section>

            <section class="bsize">
              <div class="tabs"><svg><use href="#pmenu" /></svg><span class="tab"><svg class="wide"><use href="#penset" /></svg>Brush size [G-pen]</span></div>
              <div class="scroller sizebox">
                <div class="grid">
                  <button v-for="[s, d] in sizes" :key="s" :aria-label="String(s)" :class="{ on: activeSize === s, big: s >= 20 }" @click="activeSize = s">
                    <i><b :style="{ width: d + 'px', height: d + 'px' }"></b></i><span v-if="s < 20">{{ s }}</span>
                  </button>
                </div>
                <div class="sb"><i class="up"></i><i class="thumb t45"></i><i class="dn"></i></div>
              </div>
            </section>

            <section class="color">
              <div class="tabs icons"><svg><use href="#pmenu" /></svg><span class="dim"><svg><use href="#sphere" /></svg></span><span class="lit"><svg><use href="#rgb" /></svg></span><span class="dim"><svg><use href="#swatch" /></svg></span><span class="dim"><svg><use href="#swatch" /></svg></span><span class="dim"><svg><use href="#misc" /></svg></span><i class="dn"></i></div>
              <div class="mix">
                <div class="modes"><span>RGI</span><span class="on">HSV</span><span>CM</span></div>
                <div class="chs">
                  <div v-for="c in channels" :key="c.id" class="ch">
                    <label :for="'ch-' + c.id">{{ c.name }}</label>
                    <input :id="'ch-' + c.id" v-model="c.value" type="range" min="0" :max="c.max" :class="['hue', c.id]">
                    <output>{{ c.text }}</output>
                    <svg class="spin"><use href="#spin" /></svg>
                  </div>
                </div>
              </div>
              <div class="chips"><i class="c1"></i><i class="c2"></i><i class="c3"></i></div>
            </section>
          </div>
          <div class="edge"></div>
        </div>
        <div class="white"></div>
      </section>

      <section class="center">
        <div class="cmd">
          <button class="light" aria-label="CLIP STUDIO"><svg class="w16"><use href="#spiralIcon" /></svg></button>
          <div class="grp first"><svg><use href="#newdoc" /></svg><svg><use href="#open" /></svg><svg><use href="#save" /></svg><svg class="spin"><use href="#spin" /></svg></div>
          <div class="grp"><svg><use href="#undo" /></svg><svg class="flip"><use href="#undo" /></svg></div>
          <div class="grp"><svg><use href="#burst" /></svg><svg><use href="#clearout" /></svg><svg><use href="#fill" /></svg><svg><use href="#scale" /></svg></div>
          <div class="grp"><svg><use href="#desel" /></svg><svg><use href="#invsel" /></svg><svg><use href="#border" /></svg></div>
          <div class="grp snap"><svg class="pr"><use href="#snapr" /></svg><svg class="pr"><use href="#snaps" /></svg><svg><use href="#snapg" /></svg></div>
          <button class="light" aria-label="Help"><svg><use href="#help" /></svg></button>
        </div>
        <div class="doc">
          <div class="title">
            <div class="wins">
              <button aria-label="Close"><svg viewBox="0 0 10 10"><path d="M2 2L8 8M8 2L2 8" /></svg></button>
              <button aria-label="Minimize"><svg viewBox="0 0 10 10"><path d="M1 5H9" /></svg></button>
              <button aria-label="Zoom"><svg viewBox="0 0 10 10"><path d="M2 2H8V8H2Z" /></svg></button>
            </div>
            <h1>Comic (4000 x 2500px 72dpi 23.7%)&nbsp; - CLIP STUDIO PAINT PRO</h1>
          </div>
          <div class="doctabs"><button><svg viewBox="0 0 10 10"><path d="M1 1L9 9M9 1L1 9" stroke="#2d2d2d" stroke-width="3" /></svg>Comic</button><i class="dn"></i></div>
          <div class="stage">
            <div class="area"><div class="canvas"></div></div>
            <div class="sb wide"><i class="up"></i><i class="thumb"></i><i class="dn"></i></div>
          </div>
          <div class="zoombar">
            <svg class="wedge" viewBox="0 0 60 8" preserveAspectRatio="none"><path d="M0 8L60 1V8Z" fill="#353535" /><path d="M26 0V8" stroke="#888" /></svg>
            <span>23.7</span>
            <svg viewBox="0 0 10 10"><circle cx="5" cy="5" r="4" fill="#ccc" stroke="#222" /><path d="M3 5H7" stroke="#111" stroke-width="1.500" /></svg>
            <svg viewBox="0 0 10 10"><circle cx="5" cy="5" r="4" fill="#ccc" stroke="#222" /><path d="M3 5H7M5 3V7" stroke="#111" stroke-width="1.500" /></svg>
            <svg viewBox="0 0 10 10"><rect x="1" y="1" width="8" height="8" fill="#333" stroke="#111" stroke-width="2" /></svg>
            <span>0.0</span>
            <svg class="wedge angle" viewBox="0 0 60 8" preserveAspectRatio="none"><path d="M0 8L26 3V8ZM27 8V3Q42 -4 60 8Z" fill="#353535" /><path d="M26 0V8" stroke="#888" /></svg>
            <svg viewBox="0 0 10 10"><path d="M2 8Q0 1 5 1Q10 1 8 8M0 6L2 9L4 6" stroke="#151515" stroke-width="1.500" fill="none" /></svg>
            <svg viewBox="0 0 10 10"><path d="M2 8Q0 1 5 1Q10 1 8 8M6 6L8 9L10 6" stroke="#151515" stroke-width="1.500" fill="none" /></svg>
            <svg class="faint"><use href="#ring" /></svg>
            <i class="arr l"></i>
            <div class="hsb"><i></i></div>
            <i class="arr r"></i>
          </div>
        </div>
        <div class="bottom"><button aria-label="Expand"><svg><use href="#dbl" /></svg></button></div>
      </section>

      <section class="side right">
        <div class="sidebody">
          <div class="matcol">
            <div class="strip"><svg><use href="#sgl" /></svg><svg class="end flip"><use href="#dbl" /></svg></div>
            <div class="mats"><button v-for="m in materials" :key="m" :aria-label="m"><svg><use :href="'#' + m" /></svg></button></div>
          </div>
          <div class="panels">
            <div class="strip"><svg><use href="#grip" /></svg><svg class="end flip"><use href="#sgl" /></svg><svg class="flip"><use href="#dbl" /></svg></div>
            <section class="item">
              <div class="tabs icons"><svg><use href="#pmenu" /></svg><span class="dim"><svg><use href="#navtab" /></svg></span><span class="dim"><svg><use href="#pictab" /></svg></span><span class="tab"><svg><use href="#itemtab" /></svg><em>Item bank</em></span><span class="dim"><svg><use href="#infotab" /></svg></span></div>
              <div class="well"><div></div><div class="rail"></div></div>
              <div class="foot split"><svg><use href="#open" /></svg><svg><use href="#gear" /></svg><svg class="end dimmed"><use href="#trash" /></svg></div>
            </section>
            <section class="lprop">
              <div class="tabs icons"><svg><use href="#pmenu" /></svg><span class="tab"><svg class="big"><use href="#redtick" /></svg>Layer Property</span><span class="dim"><svg><use href="#misc" /></svg></span><span class="dim"><svg><use href="#flask" /></svg></span></div>
              <div class="railed">
                <div class="fields">
                  <h2>Effect</h2>
                  <div class="fx"><svg><use href="#fcircle" /></svg><svg><use href="#ftone" /></svg><svg><use href="#flayer" /></svg><svg class="spin"><use href="#spin" /></svg></div>
                  <h2>Expression color</h2>
                  <button class="expr"><i></i>Color<svg class="spin"><use href="#spin" /></svg></button>
                </div>
                <div class="rail"></div>
              </div>
            </section>
            <section class="layer">
              <div class="tabs icons"><svg><use href="#pmenu" /></svg><span class="tab"><svg class="big"><use href="#layers" /></svg>Layer</span><span class="dim fixed"><svg><use href="#hist" /></svg></span><span class="dim fixed"><svg><use href="#misc" /></svg></span></div>
              <div class="blend"><button>Normal<svg class="spin"><use href="#spin" /></svg></button><i></i><output>100</output><svg class="spin"><use href="#spin" /></svg></div>
              <div class="lrow a"><svg><use href="#lclip" /></svg><svg><use href="#lref" /></svg><svg><use href="#lock" /></svg><svg><use href="#locka" /></svg><span><svg><use href="#wand" /></svg><svg class="spin"><use href="#spin" /></svg></span><span><svg><use href="#desel" /></svg><svg class="spin"><use href="#spin" /></svg></span></div>
              <div class="lrow b"><button v-for="l in layerTools" :key="l" :aria-label="l"><svg><use :href="'#' + l" /></svg></button></div>
              <div class="railed grow">
                <ul class="layerlist">
                  <li>
                    <span class="cell"><svg><use href="#eye" /></svg></span><span class="cell"><svg><use href="#quill" /></svg></span>
                    <div class="info on"><i class="thumbn checker"></i><p>100 % Normal<br>Layer 1</p></div>
                  </li>
                  <li>
                    <span class="cell"><svg><use href="#eye" /></svg></span><span class="cell"></span>
                    <div class="info"><i class="thumbn"></i><svg class="pp"><use href="#paper" /></svg><p class="low">Paper</p></div>
                  </li>
                </ul>
                <div class="rail"></div>
              </div>
            </section>
          </div>
        </div>
        <div class="white"></div>
      </section>
    </main>

    <footer class="dockbar">
      <div class="wall wl"></div>
      <nav class="dock">
        <template v-for="d in dock" :key="d.id">
          <i v-if="d.sep" class="sep"></i>
          <a v-else href="#" :aria-label="d.id" :class="{ run: d.run }"><svg><use :href="'#' + d.id" /></svg><b v-if="d.badge">{{ d.badge }}</b><span v-if="d.id === 'calendar'" class="date"><small>FEB</small>19</span></a>
        </template>
      </nav>
      <div class="wall wr"><p>are constructs,</p><p>Demons are org</p></div>
    </footer>
  </div>
</template>

<style>
html, body { margin: 0; overflow: hidden; background: #4a4a4a; }
</style>

<style scoped>
* { box-sizing: border-box; margin: 0; padding: 0; }
.desktop { height: 100vh; display: flex; flex-direction: column; overflow: hidden; font: 500 7px/9px Inter, "Liberation Sans", sans-serif; color: #ececec; }
.defs { position: absolute; width: 0; height: 0; }
svg { display: block; flex: none; width: 12px; height: 12px; }
button { font: inherit; color: inherit; border: 0; background: none; display: flex; align-items: center; justify-content: center; }
i, b { display: block; font-style: normal; }
em { font-style: normal; }
ul { list-style: none; }
a { color: inherit; text-decoration: none; }
.spin { width: 6px; height: 10px; }
.flip { transform: scaleX(-1); }
.end { margin-left: auto; }

.menubar { height: 15px; flex: none; display: flex; align-items: center; padding: 0 15px 0 14px; font-size: 9px; line-height: 15px; color: #f5f0f0; background: linear-gradient(90deg, #111 0, #141112 15%, #35141a 17%, #451619 23%, #3c1316 45%, #35121a 58%, #631217 70%, #701519 85%, #571216 100%); white-space: nowrap; }
.apple { width: 9px; height: 11px; margin-right: 13px; }
.menubar strong { font-weight: 800; margin-right: 14px; }
.menubar nav { display: flex; gap: 12px; }
.status { margin-left: auto; display: flex; align-items: center; gap: 7px; }
.status time { margin: 0 10px 0 5px; }
.m9 { width: 9px; height: 9px; }
.m11 { width: 11px; height: 11px; }
.m14 { width: 14px; height: 11px; }
.m16 { width: 17px; height: 12px; }

.work { flex: 1; min-height: 0; display: flex; background: #4a4a4a; }
.side { display: flex; flex-direction: column; flex: none; }
.left { width: 151px; }
.right { width: 149px; }
.sidebody { flex: 1; min-height: 0; display: flex; background: #77797d; border-bottom: 3px solid #3c3c3c; overflow: hidden; }
.white { height: 11px; flex: none; background: linear-gradient(#d9d9d9, #ececec 40%, #e2e2e2); border-bottom-left-radius: 3px; }
.edge { width: 5px; background: linear-gradient(90deg, #555, #444 60%, #333); }
.strip { height: 14px; flex: none; display: flex; align-items: center; padding: 0 2px; gap: 3px; background: linear-gradient(#626262, #505050); }
.strip svg { width: 10px; height: 10px; }
.tabs { height: 15px; flex: none; display: flex; align-items: flex-end; background: linear-gradient(#4b4b4b, #434343); border-top: 1px solid #333; border-bottom: 2px solid #77797d; padding-left: 2px; }
.tabs > svg { width: 9px; height: 9px; margin-bottom: 1px; }
.tab { height: 11px; display: flex; align-items: center; gap: 1px; margin-left: 2px; padding: 0 2px; background: #77797d; border-top: 1px solid #999; font-size: 6px; line-height: 9px; white-space: nowrap; overflow: hidden; }
.tab svg { width: 9px; height: 10px; }
.tab .wide { width: 14px; }
.tab .big { width: 13px; }
.tab.mini { margin-left: auto; padding: 0 1px; }
.panels > section { flex: none; display: flex; flex-direction: column; }
.left .panels { flex: 1; min-width: 0; display: flex; flex-direction: column; }

.toolcol { width: 29px; flex: none; border-right: 2px solid #4d4e50; display: flex; flex-direction: column; }
.toolcol .strip { gap: 8px; padding: 0; }
.tools { height: 386px; display: flex; flex-direction: column; }
.tools button { flex: 1; min-height: 0; }
.tools svg { width: 13px; height: 13px; }
.tools .on { margin: 0 4px 0 6px; background: #6f94a8; border: 1px solid #4f6f82; }
.tools button:nth-child(15) { border-top: 1px solid #555; }
.swatches { display: grid; grid-template-columns: 15px 10px; grid-template-rows: 9px 7px 9px 6px; padding: 2px 1px; }
.bgc { grid-area: 2 / 1 / 4 / 3; background: #000; margin-left: 10px; }
.fgc { grid-area: 1 / 1 / 3 / 2; background: #d90606; border: 1px solid #74c8f0; outline: 1px solid #333; outline-offset: -2px; z-index: 1; }
.clear, .c3, .checker { background: repeating-conic-gradient(#555 0 25%, #fff 0 50%) 0 0 / 6px 6px; }
.clear { grid-area: 4 / 1 / 5 / 3; }

.scroller { display: flex; overflow: hidden; }
.scroller > :first-child { flex: 1; min-width: 0; }
.sb { width: 8px; flex: none; display: flex; flex-direction: column; background: #5f6062; border-left: 1px solid #4a4a4c; }
.up, .dn { height: 7px; flex: none; background: #77797c; border: 1px solid #4e4e50; display: grid; place-items: center; }
.up::after, .dn::after { content: ""; width: 4px; height: 2px; background: #222; clip-path: polygon(50% 0, 100% 100%, 0 100%); }
.dn::after { clip-path: polygon(0 0, 100% 0, 50% 100%); }
.dn { margin-top: auto; }
.thumb { display: flex; flex-direction: column; justify-content: center; background: linear-gradient(90deg, #8b8c8f, #6f7073); border: 1px solid #505153; }
.thumb::after { content: ""; display: block; height: 5px; margin: 0 1px; background: repeating-linear-gradient(#555 0 1px, transparent 1px 2px); }
.t80 { height: 78%; }
.t70 { height: 62%; }
.t45 { height: 37%; }

.groups { display: grid; grid-template-columns: 1fr 1fr; gap: 2px; height: 16px; padding: 0 2px 0 1px; margin-top: 1px; }
.groups button { justify-content: flex-start; gap: 3px; border: 1px solid #57585a; border-top-color: #8b8b8e; padding-left: 2px; }
.groups .on { background: #6a90a3; }
.groups svg { width: 12px; height: 13px; }
.penbox { margin-top: 2px; height: 103px; border-top: 1px solid #4b4c4f; }
.penbox ul { overflow: hidden; }
.penbox li { height: 16px; display: grid; border-bottom: 1px solid #4c4d50; }
.penbox li.on { background: linear-gradient(#83a7b8, #64899b); }
.penbox li svg { grid-area: 1 / 1; width: 80px; height: 15px; }
.penbox li span { grid-area: 1 / 1; justify-self: end; align-self: end; padding: 0 3px 1px; line-height: 10px; font-weight: 600; }
.foot { height: 14px; display: flex; justify-content: flex-end; align-items: center; gap: 2px; padding: 0 1px; }

.preview { height: 26px; display: grid; background: linear-gradient(90deg, #b1b1b1 50%, #77797d 50%); border-bottom: 1px solid #222; }
.preview span { grid-area: 1 / 1; justify-self: start; align-self: start; padding: 0 1px; background: #858688; }
.stroke { grid-area: 1 / 1; width: 100%; height: 25px; }
.mag { grid-area: 1 / 1; justify-self: end; align-self: end; width: 13px; height: 13px; }
.propbox { height: 69px; margin-top: 1px; }
.rows { overflow: hidden; border: 1px solid #5d5e61; border-bottom: 0; padding-left: 9px; }
.prow { height: 18px; display: flex; align-items: center; gap: 2px; border-bottom: 1px solid #66686b; padding-right: 2px; }
.prow label { flex: 1; line-height: 9px; height: 15px; font-weight: 600; }
.flat { appearance: none; display: block; width: 33px; height: 5px; margin-left: 15px; background: linear-gradient(90deg, #b5b5b6 var(--f), transparent var(--f)); border-bottom: 1px solid #444; }
.flat::-webkit-slider-thumb { appearance: none; width: 1px; height: 4px; }
.dynb { width: 10px; height: 15px; border: 1px solid #57585a; background: #808285; }
.dynb.none { visibility: hidden; }
.dynb svg { width: 9px; height: 12px; }
.anti { color: #b9b9b9; font-weight: 400; }
.anti > span { font-size: 6px; white-space: nowrap; }
.aa { margin-left: auto; display: flex; align-items: center; background: #66686b; border: 1px solid #56575a; }
.aa button { width: 17px; height: 14px; }
.aa .on { background: #789cae; outline: 1px solid #91b7c9; }
.aa i { width: 9px; height: 9px; border-radius: 50%; background: #222; }
.aa .a1 { width: 12px; height: 12px; border: 3px solid #ddd; }
.aa .a2 { width: 12px; height: 12px; background: radial-gradient(#222 35%, #aaa 48%, #c2c2c2 68%); }
.aa .a3 { width: 12px; height: 12px; background: radial-gradient(#222 15%, #777 50%, #aaa 72%); }
.bsize { margin-top: 1px; }
.sizebox { height: 101px; border-top: 1px solid #555; }
.grid { display: grid; grid-template-columns: repeat(5, 1fr); grid-auto-rows: 27px; overflow: hidden; }
.grid button { flex-direction: column; justify-content: flex-start; border-right: 1px solid #4b4c4f; border-bottom: 1px solid #4b4c4f; font-weight: 600; }
.grid .on { background: linear-gradient(#82a5b6, #658a9c); }
.grid i { height: 16px; display: grid; place-items: center; padding-top: 2px; flex: none; }
.grid .big i { height: 18px; }
.grid b { border-radius: 50%; background: #000; }

.color { margin-top: 1px; }
.color .tabs { height: 14px; border-bottom-width: 2px; }
.icons { gap: 2px; align-items: center; }
.icons > span:not(.tab) { height: 11px; flex: 1; display: flex; justify-content: center; align-items: center; background: #626365; border: 1px solid #4c4d4f; }
.icons > span.fixed:not(.tab) { flex: 0 0 18px; }
.icons > .tab { align-self: flex-end; }
.icons > .lit { background: #77797d; }
.icons .lit svg { width: 14px; }
.icons .dn { width: 7px; height: 9px; margin: 0; }
.mix { display: flex; margin: 1px 6px 0 2px; height: 58px; }
.modes { width: 11px; display: flex; flex-direction: column; flex: none; }
.modes span { flex: 1; writing-mode: vertical-rl; transform: rotate(180deg); text-align: center; font-size: 7px; color: #55565a; border: 1px solid #5c5d60; background: #717377; }
.modes .on { color: #ddd; background: #77797d; }
.chs { flex: 1; border: 1px solid #4d4e50; border-left-color: #3f3f41; padding-top: 4px; }
.ch { height: 17px; display: flex; align-items: center; gap: 2px; padding: 0 2px 0 1px; font-weight: 600; }
.ch label { width: 8px; }
.ch output { flex: 1; text-align: right; padding-right: 1px; font-weight: 500; }
.hue { appearance: none; width: 51px; height: 13px; background: transparent; }
.hue::-webkit-slider-runnable-track { height: 6px; border: 1px solid #4a4a4a; background: var(--g); }
.hue::-webkit-slider-thumb { appearance: none; width: 8px; height: 5px; margin-top: 5px; background: #505154; clip-path: polygon(50% 0, 100% 100%, 0 100%); }
.hue.h { --g: linear-gradient(90deg, #f33, #f91, #ee2, #3d2, #1cc, #12f, #91e, #e2b, #f23); }
.hue.s { --g: linear-gradient(90deg, #d6c5c5, #d80505); }
.hue.v { --g: linear-gradient(90deg, #000, #f00); }
.chips { display: grid; grid-template-columns: 1fr 1fr 1fr; gap: 3px; padding: 0 6px 0 1px; height: 16px; }
.c1 { background: #d60505; border: 1px solid #64bfe9; outline: 1px solid #ddd; outline-offset: -3px; }
.c2 { background: #000; }

.center { flex: 1; min-width: 0; display: flex; flex-direction: column; background: #4a4a4a; }
.cmd { height: 17px; flex: none; display: flex; align-items: center; background: #797b7f; }
.light { height: 14px; width: 27px; background: linear-gradient(#fafafa, #d5d5d5); border: 1px solid #bbb; }
.light .w16 { width: 16px; height: 12px; }
.grp { display: flex; align-items: center; gap: 4px; padding: 0 3px 0 5px; height: 17px; border-right: 1px solid #696a6d; }
.grp.first { padding-left: 7px; }
.grp .pr { background: #626367; outline: 1px solid #58595c; }
.grp.snap { border: 0; padding-right: 8px; }
.doc { flex: 1; min-height: 0; margin: 1px 3px 0 0; display: flex; flex-direction: column; border-left: 2px solid #3b3b3b; border-bottom: 2px solid #3a3a3a; background: #484848; }
.title { height: 16px; flex: none; display: grid; align-items: center; background: linear-gradient(#505050, #474747); border-top: 1px solid #333; }
.wins { grid-area: 1 / 1; display: flex; gap: 2px; padding-left: 1px; z-index: 1; }
.wins button { width: 10px; height: 10px; border-radius: 50%; background: #1c1c1c; }
.wins svg { width: 7px; height: 7px; stroke: #bbb; stroke-width: 2; fill: none; }
.title h1 { grid-area: 1 / 1; text-align: center; font-size: 8px; line-height: 12px; font-weight: 600; color: #c4c4c4; }
.doctabs { height: 13px; flex: none; display: flex; justify-content: space-between; background: #4b4b4b; border-bottom: 1px solid #3b3b3b; }
.doctabs button { width: 66px; justify-content: flex-start; gap: 3px; padding-left: 4px; background: linear-gradient(#757575, #656565); border-top: 1px solid #888; }
.doctabs button svg { width: 5px; height: 5px; }
.doctabs .dn { width: 8px; height: 11px; margin: 0 1px; }
.stage { flex: 1; min-height: 0; display: flex; background: #474747; }
.area { flex: 1; display: flex; padding: 36px 6px 36px 8px; }
.canvas { flex: 1; background: #fff; }
.sb.wide { width: 9px; }
.wide .thumb { flex: none; height: 41%; margin: auto 0; }
.wide .dn { margin: 0; }
.zoombar { height: 10px; flex: none; display: flex; align-items: center; gap: 4px; padding: 0 8px 0 2px; background: #626262; border-top: 1px solid #3c3c3c; font-weight: 600; color: #eee; }
.zoombar svg { width: 9px; height: 9px; }
.zoombar svg.wedge { width: 50px; height: 8px; margin-right: -6px; }
.zoombar svg.angle { margin-right: 0; }
.faint { opacity: .5; }
.arr { width: 7px; height: 8px; background: #777; border: 1px solid #444; display: grid; place-items: center; }
.arr::after { content: ""; width: 2px; height: 4px; background: #222; clip-path: polygon(0 50%, 100% 0, 100% 100%); }
.arr.r::after { transform: scaleX(-1); }
.hsb { flex: 1; height: 8px; background: #696969; }
.hsb i { width: 40%; height: 8px; margin-left: 30%; background: linear-gradient(#8b8b8b, #6d6d6d); border: 1px solid #555; display: grid; place-items: center; }
.hsb i::after { content: ""; width: 6px; height: 4px; background: repeating-linear-gradient(90deg, #444 0 1px, transparent 1px 2px); }
.bottom { height: 15px; flex: none; background: linear-gradient(#5e5e5e, #545454); border-top: 2px solid #444; }
.bottom button { width: 10px; height: 12px; margin-left: 2px; background: #555; border: 1px solid #666; }
.bottom svg { width: 10px; height: 10px; transform: rotate(90deg); }

.matcol { width: 31px; flex: none; background: #535353; border-left: 2px solid #3b3b3b; border-right: 2px solid #3e3e3e; display: flex; flex-direction: column; }
.matcol .strip { padding: 0 1px; }
.mats { height: 321px; margin-top: 1px; display: flex; flex-direction: column; gap: 3px; padding: 0 2px 0 3px; }
.mats button { flex: 1; min-height: 0; background: #797b7e; border: 1px solid #434345; outline: 1px solid #626365; outline-offset: -2px; }
.mats svg { width: 20px; height: 24px; }
.right .panels { flex: 1; min-width: 0; display: flex; flex-direction: column; padding-right: 2px; }
.right .panels > .strip { margin-right: -2px; }
.item .tab { width: 48px; }
.item .tab em { background: linear-gradient(90deg, #ececec 60%, #8a8b8e); background-clip: text; color: transparent; }
.well { height: 91px; display: grid; grid-template-columns: 1fr 8px; margin-left: 2px; border: 1px solid #535456; border-right: 0; }
.rail { width: 8px; background: #6b6c70; border-left: 1px solid #505154; border-right: 1px solid #505154; }
.foot.split { justify-content: flex-start; padding: 0 4px; height: 15px; gap: 4px; }
.foot.split svg { width: 10px; height: 10px; }
.dimmed { opacity: .35; }
.railed { display: flex; justify-content: space-between; }
.fields { flex: 1; height: 110px; padding: 3px 5px 0 7px; }
.fields h2 { font-size: 7px; line-height: 9px; font-weight: 600; display: flex; align-items: center; gap: 3px; }
.fields h2::after { content: ""; flex: 1; height: 1px; background: #87898c; }
.fx { display: flex; align-items: center; justify-content: space-between; width: 57px; height: 14px; margin: 0 0 2px auto; padding: 0 2px; background: #6b6c70; border: 1px solid #5b5c5f; }
.fx svg:not(.spin) { width: 11px; height: 11px; }
.expr { width: 58px; height: 13px; margin: 2px 0 0 5px; border: 1px solid #515255; background: #6f7175; justify-content: space-between; padding: 0 2px 0 8px; font-weight: 600; }
.expr i { width: 10px; height: 10px; background: linear-gradient(90deg, #f07a7a 33%, #63b8ee 33% 66%, #83d98b 66%); }
.layer { flex: 1 !important; margin-top: 1px; }
.blend { height: 14px; display: flex; align-items: center; gap: 3px; padding-right: 2px; }
.blend button { width: 57px; height: 12px; border: 1px solid #56575a; justify-content: space-between; padding: 0 2px 0 10px; }
.blend i { flex: 1; height: 6px; background: repeating-conic-gradient(#ccc 0 25%, #fff 0 50%) 0 0 / 6px 6px; border: 1px solid #999; }
.lrow { height: 15px; display: flex; align-items: center; justify-content: space-between; }
.lrow svg:not(.spin) { width: 11px; height: 11px; }
.lrow.a { padding-left: 18px; }
.lrow span { display: flex; align-items: center; border: 1px solid #606164; opacity: .6; height: 12px; }
.lrow.b { padding: 0 2px 0 9px; height: 16px; border-top: 1px solid #5f6063; }
.grow { flex: 1; border-top: 1px solid #505154; }
.layerlist { flex: 1; }
.layerlist li { height: 22px; display: flex; border-bottom: 1px solid #505154; }
.cell { width: 16px; display: grid; place-items: center; border-right: 1px solid #55565a; }
.cell + .cell { width: 13px; }
.cell svg { width: 9px; height: 9px; }
.info { flex: 1; display: flex; align-items: center; gap: 2px; padding-left: 3px; white-space: nowrap; line-height: 9px; overflow: hidden; }
.info.on { background: #6f94a6; border: 1px solid #5b7c8c; padding-left: 2px; }
.thumbn { width: 23px; height: 17px; flex: none; border: 1px solid #222; background-color: #fff; }
.checker { background: repeating-conic-gradient(#ccc 0 25%, #fff 0 50%) 0 0 / 6px 6px; }
.pp { width: 14px; height: 14px; align-self: flex-start; margin-left: 2px; }
.low { align-self: flex-end; }

.dockbar { height: 44px; flex: none; display: flex; overflow: hidden; }
.wall { width: 94px; flex: none; }
.wl { background: radial-gradient(ellipse at 30% 20%, #7c2a12 0, transparent 45%), linear-gradient(90deg, #c04a10, #a8400f 45%, #d07c0c 58%, #dd9208 85%, #d58a0a); }
.dock { flex: 1; display: flex; align-items: center; padding: 0 3px; border: 1px solid #7a3a1a; border-bottom: 0; background: linear-gradient(90deg, #bd7413 0, #a95d13 8%, #7b3212 12%, #541b12 17%, #6b5219 20%, #7c7719 24%, #8f7216 28%, #75491c 33%, #884526 37%, #a81627 41%, #8e1420 46%, #330d14 51%, #270c16 56%, #4a0d15 62%, #710e12 68%, #7c0e10 100%); }
.dock a { flex: 1; height: 42px; padding-top: 4px; display: grid; grid-template-rows: 30px 1fr; justify-items: center; position: relative; }
.dock svg { width: 30px; height: 30px; }
.dock .run::after { content: ""; width: 3px; height: 3px; border-radius: 50%; background: #efa0a0; margin-top: 5px; }
.dock b { position: absolute; right: 0; top: 2px; width: 13px; height: 13px; border-radius: 50%; background: #f01414; color: #fff; font-size: 8px; line-height: 13px; font-weight: 500; text-align: center; }
.date { position: absolute; top: 7px; left: 0; right: 1px; transform: rotate(-7deg); text-align: center; color: #333; font-size: 13px; line-height: 14px; font-weight: 400; }
.date small { display: block; font-size: 5px; line-height: 6px; color: #fff; }
.sep { width: 17px; height: 30px; background: linear-gradient(#a83238, #a83238) center / 1px 100% no-repeat; flex: none; }
.wr { background: linear-gradient(#111 3px, #c80404 5px); color: #120000; font: italic 900 14px/20px Lato, "Open Sans", sans-serif; white-space: nowrap; padding: 1px 0 0 1px; overflow: hidden; }
</style>
